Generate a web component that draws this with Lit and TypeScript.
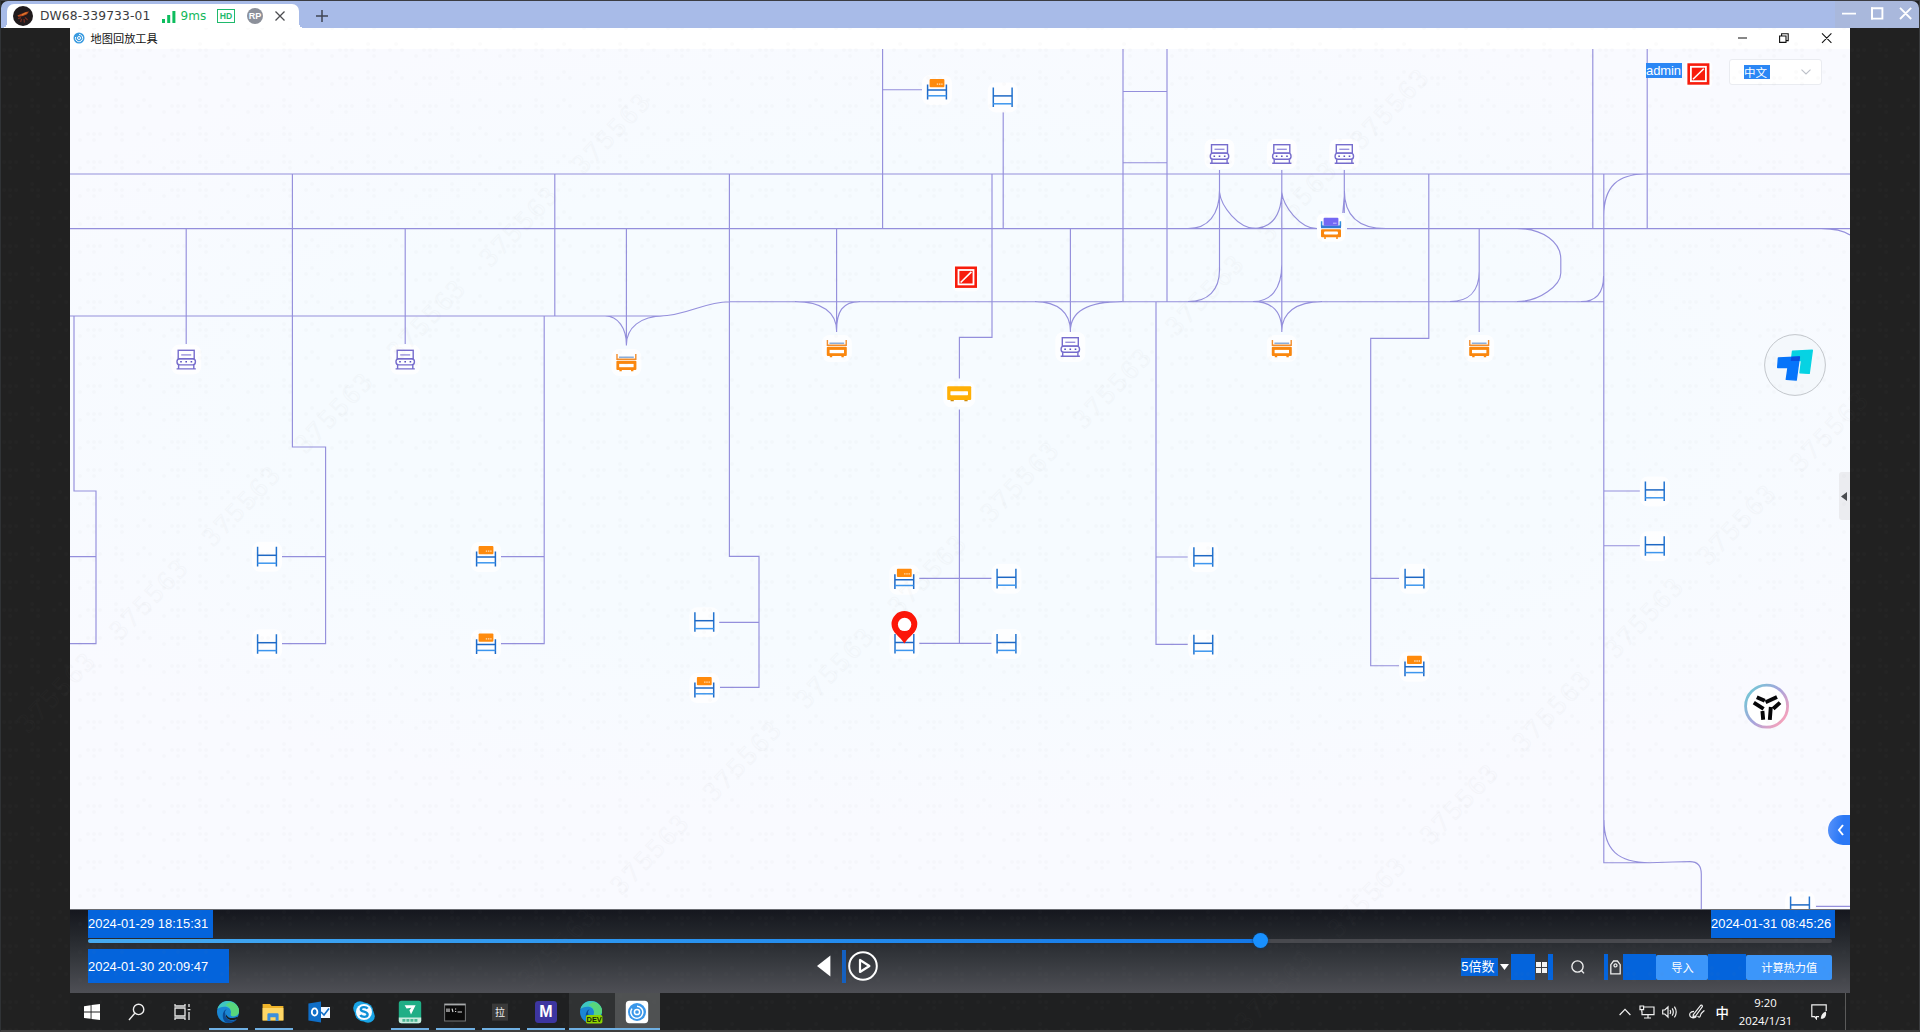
import { LitElement, html, svg, css } from "lit";
import { customElement } from "lit/decorators.js";

type NodeKind = "shelf" | "loaded" | "loader" | "conveyor" | "cart" | "lift" | "alert";
interface MapNode { kind: NodeKind; x: number; y: number }

// Track segments, in window coordinates.
const TRACKS = [
  "M70 174H1850", "M70 228.6H1316M1347 228.6H1850",
  "M70 316H660C686 316 704 301.7 729 301.7H1604",
  "M74 316V491H96V643.6H70M70 556.6H96",
  "M186.2 228.6V344", "M292.4 174V447H325.6V643.6H282M282 556.6H325.6",
  "M405.2 228.6V344", "M554.8 174V316", "M544.2 316V643.6H501M501 556.6H544",
  "M626.4 228.6V345.5M605 316C618 316 626.4 328 626.4 345M626.4 345C626.4 328 640 316 664 316",
  "M729.4 174V556.4H759V687.4H720M719 622.4H759",
  "M836.6 228.6V332M795 301.6C822 301.6 836.6 312 836.6 331C836.6 312 842 301.6 860 301.6",
  "M992 174V337.4H959.4V378.4M959.4 409.4V643.4M919 578.4H991.7M919 643.4H991.7",
  "M1070.4 228.6V332M1035 301.6C1058 301.6 1070.4 313 1070.4 331C1070.4 313 1086 301.6 1122 301.6",
  "M1123 49V301.6M1167 49V301.6M1123 91.5H1167M1123 162.7H1167",
  "M1156 301.6V644.4H1187.7M1156 557H1187.7",
  "M882.6 49V228.6M882.6 89.7H922", "M1003.2 112V228.6",
  "M1219.5 170V270C1219.5 290 1208 301.6 1188 301.6",
  "M1219.5 190C1219.5 215 1208 228.6 1188 228.6M1219.5 192C1221 206 1238 228.6 1256 228.6",
  "M1281.8 170V332M1281.8 190C1281.8 215 1272 228.6 1252 228.6M1281.8 192C1283 206 1300 228.6 1317 228.6",
  "M1281.8 264C1281.8 290 1270 301.6 1253 301.6C1272 301.6 1281.8 312 1281.8 331C1281.8 313 1296 301.6 1322 301.6",
  "M1344.3 170V196L1342.8 213M1344.3 170V213M1344.3 190C1344.3 215 1358 228.6 1386 228.6",
  "M1428.8 174V338.3H1370.7V665.7H1399M1370.7 578.3H1399",
  "M1479.2 228.6V332M1479.2 271C1479.2 292 1468 301.6 1450 301.6",
  "M1517 228.6C1544 228.6 1560.8 243 1560.8 259V273C1560.8 285 1540 301.6 1517 301.6",
  "M1592.8 49V228.6M1647.2 49V228.6",
  "M1603.8 174V862.7H1640C1672 862.7 1672 861.6 1690 861.6Q1701.3 861.6 1701.3 874V909",
  "M1603.8 216C1603.8 186 1618 174 1646 174", "M1603.6 276C1603.6 293 1596 301.6 1581 301.6",
  "M1604 820C1604 850 1618 862.7 1650 862.7",
  "M1821 228.6C1834 228.6 1844 231 1850 235", "M1604 491H1640M1604 545.7H1640", "M1816 906.4H1850",
];

const at = (kind: NodeKind, ...pts: [number, number][]): MapNode[] => pts.map(([x, y]) => ({ kind, x, y }));

// x is the centre of the glyph, y its top edge.
const NODES: MapNode[] = [
  ...at("shelf", [1002.7, 87.4], [267, 546.8], [267, 634.2], [704.3, 612.2], [904.4, 634], [1006.5, 568.8], [1006.5, 634],
    [1203.3, 547.2], [1203.3, 634.8], [1414.5, 568.8], [1654.8, 481.4], [1654.8, 536.2], [1800, 896.4]),
  ...at("loaded", [937, 79], [486, 546], [486, 633.6], [704.3, 677], [904.3, 568.7], [1414.4, 655.8]),
  ...at("loader", [626.4, 354], [836.8, 340], [1281.8, 340], [1479.2, 340]),
  ...at("conveyor", [186.2, 349.6], [405.2, 349.6], [1070.3, 337], [1219.5, 144], [1281.8, 144], [1344.3, 144]),
  ...at("cart", [959.2, 386.3]),
  ...at("lift", [1331, 217.8]),
  ...at("alert", [966, 266.5]),
];

const WATERMARKS: [number, number][] = [];
for (const [x0, y0] of [[20, 732], [521, 987], [1238, 1030]]) {
  for (let i = 0; i < 10; i++) {
    const x = x0 + i * 92.5;
    const y = y0 - i * 93.2;
    if (x < 1810 && y > 130) WATERMARKS.push([x, y]);
  }
}

const glyphs: Record<NodeKind, () => unknown> = {
  shelf: () => svg`<rect x="-15" y="-5" width="30" height="30" rx="8" fill="#fff" opacity=".8"/>
    <path d="M-9.4 0V19.6M9.4 0V19.6" stroke="#2374d0" stroke-width="1.5"/>
    <path d="M-9.4 8.5H9.4" stroke="#1e68c4" stroke-width="1.5"/><path d="M-9.4 16.4H9.4" stroke="#3d96ee" stroke-width="1.5"/>`,
  loaded: () => svg`<rect x="-15" y="-4" width="30" height="30" rx="8" fill="#fff" opacity=".8"/>
    <path d="M-9.4 5.6V20.4M9.4 5.6V20.4M-9.4 11H9.4" stroke="#1e6ac8" stroke-width="1.5"/>
    <path d="M-9.4 16.8H9.4" stroke="#3d96ee" stroke-width="1.5"/>
    <rect x="-7.4" y="0" width="14.8" height="8.2" rx="1" fill="#ff8a0c"/><path d="M-.2 5.2H6" stroke="#ffe0b8" stroke-width="1.3" stroke-dasharray="1.4 .8"/>`,
  loader: () => svg`<rect x="-15" y="-5" width="30" height="27" rx="8" fill="#fff" opacity=".8"/>
    <path d="M-9.4 0V5.2H9.4V0" fill="none" stroke="#f28c2a" stroke-width="1.4"/><path d="M-7.4 3.2H7.4" stroke="#6f9ad0" stroke-width="1.2"/>
    <rect x="-10" y="6.8" width="20" height="9.2" rx="1" fill="#fa870e"/><rect x="-7.2" y="9.9" width="14.4" height="3.3" fill="#fff"/>
    <path d="M-7 16V17.2H-4.6V16M4.6 16V17.2H7V16" fill="#fa870e"/>`,
  conveyor: () => svg`<rect x="-15" y="-5" width="30" height="30" rx="8" fill="#fff" opacity=".8"/>
    <g fill="none" stroke="#766ccd" stroke-width="1.4"><rect x="-8" y=".7" width="16" height="8.4"/><path d="M-5 5.3H5" stroke="#9a92dd"/>
    <rect x="-9.2" y="9.1" width="18.4" height="6.2" rx="2.8"/><path d="M-7.6 15.3V19M7.6 15.3V19M-9.6 19.3H9.6"/></g>
    <path d="M-6 12.2h1.6M-.8 12.2h1.6M4.4 12.2H6" stroke="#5b50bd" stroke-width="1.6"/>`,
  cart: () => svg`<rect x="-16" y="-5" width="32" height="26" rx="8" fill="#fff" opacity=".8"/>
    <rect x="-12" y="0" width="24" height="13.6" rx="1" fill="#ffb006"/><rect x="-8.8" y="4.9" width="17.6" height="4" rx=".6" fill="#fff"/>
    <path d="M-8.6 14.3H-5.4M5.2 14.3H8.4" stroke="#d08a08" stroke-width="1.4"/>`,
  lift: () => svg`<rect x="-14" y="-4" width="28" height="28" rx="6" fill="#fff" opacity=".9"/>
    <path d="M-9.4 3.4V9M9.4 3.4V9" stroke="#2f8fe0" stroke-width="1.5"/><rect x="-10" y="7.6" width="20" height="2.8" fill="#3278d6"/>
    <rect x="-7.4" y="0" width="14.8" height="8" rx="1" fill="#7468f4"/><path d="M2 5.4H5.6" stroke="#c4bfff"/>
    <rect x="-10" y="11.4" width="20" height="8" rx="1" fill="#fa870e"/><rect x="-7" y="13.6" width="14" height="3.2" rx="1" fill="#fff"/>
    <path d="M-6 19.4V21M6 19.4V21" stroke="#fa870e" stroke-width="2"/>`,
  alert: () => svg`<rect x="-14" y="-3" width="28" height="28" rx="6" fill="#fff" opacity=".8"/>
    <rect x="-11" y="0" width="22" height="21.4" fill="#f81c0c"/><rect x="-7.5" y="3.5" width="15" height="14.4" fill="none" stroke="#fff" stroke-width="1.8"/>
    <path d="M-5.4 16L5.4 5.4" stroke="#fff" stroke-width="1.6"/>`,
};

@customElement("track-map")
class TrackMap extends LitElement {
  static styles = css`
    :host { display: block; position: relative; height: 860px; overflow: hidden;
      background: radial-gradient(ellipse 62% 48% at 50% 42%, #f6fbff 60%, #f9faff 100%); }
    .canvas { display: block; width: 1780px; height: 860px; }
    .float { position: absolute; }
    .user { left: 1576px; top: 14px; width: 36px; height: 15px; background: #2b87f5; color: #fff; font: 13px/15px "Liberation Sans", sans-serif; letter-spacing: -.1px; }
    .lang { left: 1659px; top: 10px; width: 93px; height: 26px; box-sizing: border-box; display: flex; align-items: center; justify-content: space-between;
      padding: 0 10px 0 14px; border: 1px solid #eaecf1; border-radius: 3px; background: #fff; }
    .lang span { width: 26px; height: 14px; background: #2b87f5; color: #fff; font: 11.5px/14px "Noto Sans CJK SC", sans-serif; white-space: nowrap; }
    .handle { right: 0; top: 423px; width: 11px; height: 48px; background: #ebecf0; border-radius: 3px 0 0 3px; display: flex; align-items: center; justify-content: center; }
    .handle svg { margin-right: 1px; }
    .tab { right: 0; top: 766px; width: 22px; height: 30px; border-radius: 15px 0 0 15px; background: linear-gradient(100deg, #5a94fb, #2b78f5 60%); display: flex; align-items: center; justify-content: center; }
    .tab svg { margin-left: 3px; }
  `;

  render() {
    return html`
      <svg class="canvas" viewBox="70 49 1780 860">
        <defs>
          <linearGradient id="ring" x1="0" y1=".1" x2="1" y2=".9"><stop offset=".1" stop-color="#79c3d6"/><stop offset=".5" stop-color="#a8a4dc"/><stop offset=".9" stop-color="#f3a2bd"/></linearGradient>
        </defs>
        <path d=${TRACKS.join("")} fill="none" stroke="#948fdc" stroke-width="1.15"/>
        ${NODES.map((n) => svg`<g transform="translate(${n.x} ${n.y})">${glyphs[n.kind]()}</g>`)}
        <path d="M904.4 643.6C900 636 891.5 633 891.5 624A12.9 12.9 0 0 1 917.3 624C917.3 633 908.8 636 904.4 643.6Z" fill="#fc1608"/>
        <circle cx="904.6" cy="624.4" r="6.7" fill="#fff"/>
        <g transform="translate(1698.4 63.3)">${glyphs.alert()}</g>

        <circle cx="1795" cy="365" r="30.4" fill="#f4f8fc" stroke="#c3c7cc"/>
        <g stroke-linejoin="round" stroke-width="1.4">
          <path d="M1792.5 351.3L1812.3 350.3L1809.2 373.4L1800 372.8L1801.5 360.5H1791.4Z" fill="#06d3e3" stroke="#06d3e3"/>
          <path d="M1778.4 358L1799.4 357L1796.2 380.1L1786.3 379.4L1788 367.6H1777.7Z" fill="#0674fa" stroke="#0674fa"/>
          <path d="M1792 357.4L1799.4 357L1798.8 360.4H1791.4Z" fill="#084fe0" stroke="#084fe0"/>
        </g>

        <circle cx="1766.6" cy="706.2" r="21" fill="#fff" stroke="url(#ring)" stroke-width="2.8"/>
        <g stroke="#060608" stroke-width="3.9" fill="none">
          <path d="M1756.8 697.2L1764.8 700.8M1765.6 702.2L1777 697M1753.8 702.6L1763.6 708.8M1780 702.6L1773.2 708.8M1762.4 711L1763.2 719.8M1770.8 707L1769.8 719.8"/>
        </g>
      </svg>
      <div class="float user">admin</div>
      <div class="float lang"><span>中文</span>
        <svg width="10" height="6" viewBox="0 0 10 6"><path d="M.5 .6L5 5L9.5 .6" fill="none" stroke="#bcc0c8" stroke-width="1.1"/></svg></div>
      <div class="float handle"><svg width="6" height="9" viewBox="0 0 6 9"><path d="M6 0V9L0 4.5Z" fill="#4a4c50"/></svg></div>
      <div class="float tab"><svg width="7" height="12" viewBox="0 0 7 12"><path d="M6 1L2 6L6 11" fill="none" stroke="#fff" stroke-width="2"/></svg></div>
    `;
  }
}

@customElement("playback-bar")
class PlaybackBar extends LitElement {
  static styles = css`
    :host { display: block; height: 84px; box-sizing: border-box; padding: 0 15px 0 18px; color: #fff; font-family: "Liberation Sans", "Noto Sans CJK SC", sans-serif;
      background: linear-gradient(#15171e, #24272c 30%, #35383d 60%, #4e4f55); border-top: 1px solid #6a6c72; }
    .range { display: flex; justify-content: space-between; height: 27.5px; }
    .stamp { display: flex; align-items: center; background: #0464dc; font-size: 12.95px; white-space: nowrap; }
    .from { width: 125px; } .to { width: 124px; }
    .track { display: flex; align-items: center; height: 4px; margin: 1.2px 3px 0 0; background: #48494e; border-radius: 2px; }
    .done { width: 1172px; height: 4px; border-radius: 2px; background: linear-gradient(90deg, #46aaf0, #2c96f0 45%, #1478e8); }
    .knob { flex: none; width: 15px; height: 15px; border-radius: 50%; margin: 0 0 0 -7px; background: #1890ff; box-shadow: 0 0 3px #083a70; }
    .row { display: flex; height: 34px; margin-top: 6.4px; align-items: center; }
    .now { width: 141px; height: 34px; }
    .play { display: flex; align-items: center; margin-left: 588px; height: 34px; }
    .sep { width: 4px; height: 33px; margin: 0 1.6px 0 11px; background: #1460c0; }
    .tools { display: flex; align-items: center; margin: 2px 3px 0 auto; height: 26.6px; }
    .rate { background: #0464dc; height: 17.6px; width: 36.6px; font-size: 13px; line-height: 17px; white-space: nowrap; }
    .caret { margin: 0 2px 0 2.4px; }
    .hl { background: #0464dc; height: 26.6px; }
    .w24 { width: 23.6px; } .w5 { width: 4.6px; } .w33 { width: 33px; } .w38 { width: 38px; }
    .grid { margin: 0 1.2px; } .find { margin: 0 19px 0 18px; } .tag { margin: 0 2.2px 0 1.8px; }
    .btn { height: 25.6px; border-radius: 2px; background: #3c96fa; font: 11.2px/25px "Noto Sans CJK SC", sans-serif; text-align: center; white-space: nowrap; align-self: flex-end; }
    .b1 { width: 52px; } .b2 { width: 85.6px; }
  `;

  render() {
    return html`
      <div class="range"><div class="stamp from">2024-01-29 18:15:31</div><div class="stamp to">2024-01-31 08:45:26</div></div>
      <div class="track"><div class="done"></div><div class="knob"></div></div>
      <div class="row">
        <div class="stamp now">2024-01-30 20:09:47</div>
        <div class="play">
          <svg width="14" height="22" viewBox="0 0 14 22"><path d="M13.4 .4V21.6L0 11Z" fill="#fff"/></svg>
          <div class="sep"></div>
          <svg width="30" height="30" viewBox="0 0 30 30" fill="none" stroke="#fff" stroke-width="2" stroke-linejoin="round"><circle cx="15" cy="15" r="13.8"/><path d="M12 9V21L21.4 15Z" stroke-width="2.2"/></svg>
        </div>
        <div class="tools">
          <div class="rate">5倍数</div>
          <svg class="caret" width="9" height="6" viewBox="0 0 9 6"><path d="M0 0H9L4.5 6Z" fill="#fff"/></svg>
          <div class="hl w24"></div>
          <svg class="grid" width="11" height="11" viewBox="0 0 11 11" fill="#f4f4f4"><path d="M0 0H5V5H0ZM6 0H11V5H6ZM0 6H5V11H0ZM6 6H11V11H6Z"/></svg>
          <div class="hl w5"></div>
          <svg class="find" width="14" height="14" viewBox="0 0 14 14" fill="none" stroke="#eee" stroke-width="1.4"><circle cx="6.5" cy="6.5" r="5.6"/><path d="M10.6 10.8L13 13.4"/></svg>
          <div class="hl w5"></div>
          <svg class="tag" width="11" height="15" viewBox="0 0 11 15" fill="none" stroke="#eee" stroke-width="1.3"><path d="M.8 13.8V4.6L3.6 1H7.4L10.2 4.6V13.8Z"/><circle cx="5.5" cy="5.4" r="1.5"/></svg>
          <div class="hl w33"></div><div class="btn b1">导入</div><div class="hl w38"></div><div class="btn b2">计算热力值</div>
        </div>
      </div>
    `;
  }
}

const edge = () => svg`<circle cx="12" cy="12" r="11" fill="#1a86d4"/>
  <path d="M1.4 9C3 3.6 7.4 1 12 1C18.4 1 23 5.6 23 11C23 15 19.6 16.6 16.4 16.2C13.6 15.8 15 14.4 15 12C15 8.6 11.4 6.8 8.4 6.8C5.2 6.8 2.6 8 1.4 9Z" fill="#3fc6c0"/>
  <path d="M14 2C20 3 23 7 23 11C23 15 19.6 16.6 16.4 16.2C14.4 15.8 15 14.4 15 12C15 8 12 6 9.4 5Z" fill="#58d67c"/>
  <path d="M9 12.4C8.6 17.6 12.6 21.4 17.6 20.4C19 20.2 20.6 19.4 21.6 18.4C19.6 21.4 16 23.2 12 23C7.4 22.6 6.2 17 7 13.6C7.6 11 9 9.4 10.8 9.2C9.6 10 9 11 9 12.4Z" fill="#0c4c96"/>
  <path d="M9.6 12.6C9.6 16.2 13 18.6 17 18C19 17.8 20.6 17.2 21.4 16.8L22 18C20 20.4 12.4 21.6 10 16.4Z" fill="#1c1e20"/>`;

interface Task { icon: () => unknown; state: string }
const TASKS: Task[] = [
  { state: "", icon: () => svg`<path d="M4 6.2L10.6 5.2V11.6H4ZM11.5 5.1L20 4V11.6H11.5ZM4 12.5H10.6V18.8L4 17.9ZM11.5 12.5H20V20L11.5 18.9Z" fill="#fff"/>` },
  { state: "", icon: () => svg`<circle cx="13.6" cy="9.4" r="5.2" fill="none" stroke="#eee" stroke-width="1.4"/><path d="M9.8 13.2L4 20" stroke="#eee" stroke-width="1.4"/>` },
  { state: "", icon: () => svg`<path d="M4 8H14V16H4ZM4 4V6H14V4M4 20V18H14V20M18 4V7M18 12V20M16.6 9.6H19.4" fill="none" stroke="#e8e8e8" stroke-width="1.3"/>` },
  { state: "run", icon: edge },
  { state: "run", icon: () => svg`<path d="M1.6 4H9L10.6 6H22.4V20.4H1.6Z" fill="#f0b429"/><path d="M1.6 8H22.4V20.4H1.6Z" fill="#ffd766"/><path d="M6.4 21V14.4Q6.4 13.2 7.6 13.2H16.4Q17.6 13.2 17.6 14.4V21H14.6V17.2H9.4V21Z" fill="#3c8fdc"/>` },
  { state: "", icon: () => svg`<rect x="12" y="7" width="11" height="11" fill="#f4f9ff"/><path d="M14 12L17 15L22 8.4" fill="none" stroke="#0f6ec8" stroke-width="1.6"/><path d="M1.4 3.6L14 1.4V22.6L1.4 20.4Z" fill="#0f6ec8"/><ellipse cx="7.6" cy="12" rx="2.8" ry="3.6" fill="none" stroke="#fff" stroke-width="1.8"/>` },
  { state: "", icon: () => svg`<circle cx="8" cy="8" r="6.8" fill="#18a4e6"/><circle cx="16" cy="16" r="6.8" fill="#18a4e6"/><circle cx="12" cy="12" r="9.4" fill="#18a4e6"/><circle cx="12" cy="12" r="8" fill="#f6fbff"/><path d="M15.6 8.6C14.4 6.6 8.8 6.4 8.8 9.2C8.8 12.4 15.6 11 15.6 14.6C15.6 17.8 9.4 17.4 8.4 15" fill="none" stroke="#0c8fd6" stroke-width="2.4"/>` },
  { state: "run", icon: () => svg`<rect x=".8" y=".8" width="22.4" height="22.4" rx="2.6" fill="#1fae86"/><path d="M6.6 5.2H17.6L13 14.6L11.4 10.2L13.4 7.8L8.6 8.4Z" fill="#fff"/><path d="M.8 17.6H23.2V20.6Q23.2 23.2 20.6 23.2H3.4Q.8 23.2 .8 20.6Z" fill="#c9ecdf"/><path d="M4.4 20.4H19.6" stroke="#4db795" stroke-width="2.6" stroke-dasharray="3 1"/>` },
  { state: "run", icon: () => svg`<rect x="1.6" y="4" width="20.8" height="17" fill="#0a0a0a" stroke="#77797a"/><path d="M1.6 4.6H22.4" stroke="#a8aaab" stroke-width="1.6"/><path d="M4 8.6V12M6 8.6V12M9 8.6L10 12M12.6 8.6V9.6M12.6 11V12M14.6 12H19" stroke="#d8d8d8" stroke-width="1.2"/>` },
  { state: "run", icon: () => svg`<rect x="4" y="3.6" width="16" height="17" fill="#3a3a3a"/><text x="12" y="16" text-anchor="middle" font-size="10" fill="#f0f0f0" font-family="Noto Sans CJK SC">拉</text>` },
  { state: "run", icon: () => svg`<rect x="1" y="1" width="22" height="22" rx="3.4" fill="#3d35a0"/><text x="12" y="17.4" text-anchor="middle" font-size="16" font-weight="700" fill="#fff" font-family="Liberation Sans">M</text>` },
  { state: "run open", icon: () => svg`${edge()}<rect x="7" y="15" width="16.4" height="8.4" rx="1.6" fill="#8fd400"/><text x="15.2" y="22" text-anchor="middle" font-size="7.4" font-weight="700" fill="#17240a" font-family="Liberation Sans">DEV</text>` },
  { state: "run active", icon: () => svg`<rect x=".8" y=".8" width="22.4" height="22.4" rx="3.6" fill="#fff"/><circle cx="12" cy="12" r="9" fill="#3a97ea"/><path d="M7 8.6A6 6 0 1 0 12 6.2" fill="none" stroke="#fff" stroke-width="1.5"/><circle cx="12" cy="12" r="2.6" fill="none" stroke="#fff" stroke-width="1.5"/>` },
];

@customElement("task-bar")
class TaskBar extends LitElement {
  static styles = css`
    :host { display: flex; height: 37px; background: #1f2021; color: #fff; }
    .item { position: relative; width: 45.4px; height: 37px; display: flex; align-items: center; justify-content: center; }
    .item svg { flex: none; margin: 0 1.6px 0 0; }
    .run::after { content: ""; position: absolute; left: 3px; right: 4px; bottom: 0; height: 2px; background: #6fb0e4; }
    .open { background: #303233; } .active { background: #4f5152; }
    .open.run::after, .active.run::after { left: 0; right: 0; }
    .tray { margin-left: auto; display: flex; align-items: center; height: 37px; }
    .tray svg { flex: none; fill: none; stroke: #f0f0f0; stroke-width: 1.2; }
    .up { margin-right: 8px; } .net { margin-right: 7px; } .vol { margin-right: 11px; } .pen { margin-right: 10.6px; }
    .ime { width: 14px; margin-right: 8.6px; font: 500 13.4px/16px "Noto Sans CJK SC", sans-serif; }
    .clock { width: 55px; margin-right: 18px; text-align: center; font: 11.3px/17.6px "Open Sans", sans-serif; white-space: nowrap; }
    .clock div { margin: 0 -4px; }
    .note { margin-right: 18px; }
    .peek { width: 1px; height: 37px; background: #5a5a5a; margin-right: 4px; }
  `;

  render() {
    return html`
      ${TASKS.map((t) => html`<div class="item ${t.state}"><svg width="24" height="24" viewBox="0 0 24 24">${t.icon()}</svg></div>`)}
      <div class="tray">
        <svg class="up" width="12" height="8" viewBox="0 0 12 8"><path d="M.6 7L6 1.4L11.4 7"/></svg>
        <svg class="net" width="16" height="14" viewBox="0 0 16 14"><path d="M5 2H15V9.6H3V6.4M1 1H4.6V4.6H1ZM2.8 4.6V7M9 9.6V13M5 13H12"/></svg>
        <svg class="vol" width="16" height="14" viewBox="0 0 16 14"><path d="M.7 5V9H2.8L6 12V2L2.8 5ZM8 5Q9.2 7 8 9M10.2 3.4Q12.4 7 10.2 10.6M12.4 1.6Q16 7 12.4 12.4"/></svg>
        <svg class="pen" width="16" height="15" viewBox="0 0 16 15"><path d="M4.4 10.6L11.6 1.4Q13.4 .6 13.4 2.6L6.8 11.8L4 12.8ZM5 7.4C1 7.6 .2 10 1 12C2 14.4 6 14.4 7.4 12.4M8.6 12C10 14 11.4 13 11.6 11C12 9 14 8 15.4 6.4"/></svg>
        <div class="ime">中</div>
        <div class="clock"><div>9:20</div><div>2024/1/31</div></div>
        <svg class="note" width="16" height="16" viewBox="0 0 16 16"><path d="M8 12.6H5.4V14.8L3.6 12.6H.8V.8H15.2V7"/><path d="M14.8 7.4Q10 9 9.8 14.8Q15 15 15.2 9.8Z" fill="#f0f0f0" stroke="none"/></svg>
        <div class="peek"></div>
      </div>
    `;
  }
}

@customElement("app-root")
class AppRoot extends LitElement {
  static styles = css`
    :host { display: flex; flex-direction: column; position: relative; box-sizing: border-box; width: 1920px; height: 1032px; overflow: hidden;
      background: #212121; border-top: 1px solid #3b3c42; border-bottom: 2px solid #3e3e3e; border-right: 1px solid #3a3c3e; border-left: 1px solid #303336; }
    .chrome { display: flex; height: 27px; background: linear-gradient(90deg, #a8bbe8 1834px, #a9b8dc 1834px); border-radius: 7px 7px 0 0; }
    .tab { position: relative; display: flex; align-items: center; width: 292px; margin: 3px 0 0 6px; height: 24px; background: #fff; border-radius: 7px 7px 0 0; box-sizing: border-box; padding-left: 6px; }
    .tab::after { content: ""; position: absolute; right: -5px; bottom: 0; width: 5px; height: 5px; background: radial-gradient(circle at 100% 0, transparent 5px, #fff 5px); }
    .tab::before { content: ""; position: absolute; left: -5px; bottom: 0; width: 5px; height: 5px; background: radial-gradient(circle at 0 0, transparent 5px, #fff 5px); }
    .tab svg { flex: none; }
    .host { margin-left: 7px; width: 121.6px; font: 12.3px/20px "DejaVu Sans", sans-serif; color: #3c3c40; white-space: nowrap; letter-spacing: .12px; }
    .ping { margin-left: 5px; width: 36.4px; font: 12px/20px "DejaVu Sans", sans-serif; color: #12b85c; white-space: nowrap; }
    .hd { box-sizing: border-box; width: 18px; height: 14.6px; border: 1.4px solid #1fb96c; color: #1fb96c; font: 700 8.6px/12px "Liberation Sans", sans-serif; text-align: center; }
    .rp { width: 16px; height: 16px; margin: 0 12px 0 12px; border-radius: 50%; background: #8c909a; color: #fff; font: 700 9px/16px "Liberation Sans", sans-serif; text-align: center; }
    .plus { margin: 9px 0 0 17px; }
    .outer { margin: 6.4px 6.6px 0 auto; }
    .window { width: 1780px; margin-left: 69px; }
    .title { display: flex; align-items: center; height: 21px; background: #fff; box-sizing: border-box; padding: 0 18px 0 3.2px; color: #111; font: 11.2px/20px "Noto Sans CJK SC", sans-serif; }
    .title svg { margin-bottom: 1px; }
    .name { margin-left: 5.4px; padding-bottom: 1px; }
    .title .ctl { margin-left: auto; margin-bottom: 2px; }
    .veil { position: absolute; left: -1px; top: -1px; width: 1920px; height: 1032px; pointer-events: none; }
    .mark { font: 27px "Liberation Serif", serif; letter-spacing: 3.4px; fill: none; stroke: #808080; stroke-width: .8; opacity: .045; }
    .stripe { position: absolute; left: -1px; top: 34px; width: 1px; height: 48px; background: #1878b8; }
  `;

  render() {
    return html`
      <div class="chrome">
        <div class="tab">
          <svg width="20" height="20" viewBox="0 0 20 20"><circle cx="10" cy="10" r="10" fill="#201a1c"/><path d="M4.4 9.4L8 8L12.6 6L16 5.6L14 8.2L10 10L5.4 10.8Z" fill="#c04c1c"/><path d="M5 12.6L8 11.6M12 11.4L14.6 14M8.6 13L7.6 16M11 13L11.4 16.6" stroke="#7a2d20" stroke-width="1.2"/><path d="M9 8.8L13.6 6.8" stroke="#e8923a" stroke-width=".8"/></svg>
          <div class="host">DW68-339733-01</div>
          <svg width="14" height="13" viewBox="0 0 14 13" fill="#0dbd5e"><path d="M0 9H3V13H0ZM5.2 5H8.2V13H5.2ZM10.4 1H13.4V13H10.4Z"/></svg>
          <div class="ping">9ms</div>
          <div class="hd">HD</div><div class="rp">RP</div>
          <svg width="10" height="10" viewBox="0 0 10 10"><path d="M.5 .5L9.5 9.5M9.5 .5L.5 9.5" stroke="#4c4d50" stroke-width="1.3"/></svg>
        </div>
        <svg class="plus" width="12" height="12" viewBox="0 0 12 12"><path d="M6 0V12M0 6H12" stroke="#3f4553" stroke-width="1.5"/></svg>
        <svg class="outer" width="70" height="13" viewBox="0 0 70 13" fill="none" stroke="#fff" stroke-width="1.9"><path d="M0 6.6H14M30 1.2H40.4V11.6H30ZM58 .8L69.2 12M69.2 .8L58 12"/><path d="M30 .3V12.5"/></svg>
      </div>
      <div class="window">
        <div class="title">
          <svg width="12" height="12" viewBox="0 0 12 12"><circle cx="6" cy="6" r="5.5" fill="#3a9be0"/><path d="M2.6 5A3.6 3.6 0 1 0 6 2.5" fill="none" stroke="#fff" stroke-width="1"/><circle cx="6" cy="6" r="1.5" fill="none" stroke="#fff"/></svg>
          <div class="name">地图回放工具</div>
          <svg class="ctl" width="94" height="12" viewBox="0 0 94 12" fill="none" stroke="#111" stroke-width="1.1"><path d="M0 6H9M41.6 4H48V10.4H41.6ZM43.6 4V1.8H50.2V8.6H48M84 1.4L93.4 10.8M93.4 1.4L84 10.8"/></svg>
        </div>
        <track-map></track-map>
        <playback-bar></playback-bar>
        <task-bar></task-bar>
      </div>
      <div class="stripe"></div>
      <svg class="veil" viewBox="0 0 1920 1032">
        <defs><pattern id="dots" width="84" height="28" patternUnits="userSpaceOnUse" y="6"><path d="M4 16h.1M10 16h.1M16 16h.1M32 10h.1M32 16h.1M38 16h.1M60 10h.1M54 16h.1M66 16h.1M10 22h.1M38 22h.1M80 22h.1" stroke="#808080" stroke-width="4" stroke-linecap="round"/></pattern></defs>
        <rect y="28" width="1920" height="1002" fill="url(#dots)" opacity=".03"/>
        ${WATERMARKS.map(([x, y]) => svg`<text class="mark" transform="translate(${x + 8} ${y + 2}) rotate(-46)">375563</text>`)}
      </svg>
    `;
  }
}
